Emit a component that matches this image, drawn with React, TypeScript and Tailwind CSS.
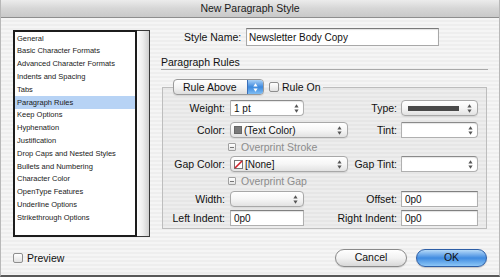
import React from "react";

const items = [
  "General",
  "Basic Character Formats",
  "Advanced Character Formats",
  "Indents and Spacing",
  "Tabs",
  "Paragraph Rules",
  "Keep Options",
  "Hyphenation",
  "Justification",
  "Drop Caps and Nested Styles",
  "Bullets and Numbering",
  "Character Color",
  "OpenType Features",
  "Underline Options",
  "Strikethrough Options",
];

function Arrows({ color = "#555" }: { color?: string }) {
  return (
    <svg width="5" height="9" viewBox="0 0 5 9" className="shrink-0">
      <path d="M2.5 0.3 L4.6 3.4 L0.4 3.4 Z" fill={color} />
      <path d="M2.5 8.7 L4.6 5.6 L0.4 5.6 Z" fill={color} />
    </svg>
  );
}

const lbl = "flex justify-end text-[10.5px] leading-none text-[#111] whitespace-nowrap";

function TextField({ className, value }: { className: string; value?: string }) {
  return (
    <div
      className={`h-[16px] bg-white border border-[#b0b0b0] border-t-[#808080] shadow-[inset_0_1px_1px_rgba(0,0,0,0.12)] flex items-center pl-[3px] text-[10px] text-[#111] ${className}`}
    >
      {value}
    </div>
  );
}

function StepField({ className, value }: { className: string; value?: string }) {
  return (
    <div
      className={`h-[16px] bg-white border border-[#b0b0b0] border-t-[#8a8a8a] rounded-r-[4px] shadow-[inset_0_1px_1px_rgba(0,0,0,0.1)] flex items-center pl-[3px] pr-[4px] text-[10px] text-[#111] ${className}`}
    >
      <span className="flex-1">{value}</span>
      <Arrows />
    </div>
  );
}

function Popup({ className, children }: { className: string; children?: React.ReactNode }) {
  return (
    <div
      className={`h-[16px] rounded-[4px] border border-[#a8a8a8] bg-gradient-to-b from-white via-[#f6f6f6] to-[#e2e2e2] shadow-[0_1px_1px_rgba(0,0,0,0.08)] flex items-center pl-[3px] pr-[5px] text-[10px] text-[#111] ${className}`}
    >
      <div className="flex-1 flex items-center gap-[2px] overflow-hidden whitespace-nowrap">{children}</div>
      <Arrows />
    </div>
  );
}

function Overprint({ text }: { text: string }) {
  return (
    <div className="flex items-center -ml-[2px] gap-[5px]">
      <div className="w-[8px] h-[8px] border border-[#a0a0a0] rounded-[1px] bg-gradient-to-b from-white to-[#e4e4e4] flex items-center justify-center">
        <div className="w-[4px] h-[1px] bg-[#777]" />
      </div>
      <span className="text-[10.5px] leading-none text-[#8c8c8c] whitespace-nowrap">{text}</span>
    </div>
  );
}

export default function App() {
  return (
    <div className="w-[500px] h-[277px] flex flex-col overflow-hidden border-x border-[#b8b8b8] border-b-2 border-b-[#5a5a5a] bg-[repeating-linear-gradient(180deg,#eeeeee_0px,#eeeeee_2px,#f5f5f5_2px,#f5f5f5_4px)] font-['Liberation_Sans',Arial,sans-serif] text-[#111]">
      {/* title bar */}
      <div className="h-[18px] shrink-0 bg-gradient-to-b from-[#ececec] via-[#d6d6d6] to-[#c9c9c9] border-b border-[#8e8e8e] flex items-center justify-center text-[10.5px] text-[#1a1a1a]">
        New Paragraph Style
      </div>

      {/* main */}
      <div className="flex pl-[12px] gap-[11px]">
        {/* list */}
        <div className="mt-[12px] h-[207px] w-[137px] flex">
          <div className="w-[124px] border-2 border-r-[2px] border-[#1c1c1c] bg-white flex flex-col">
            {items.map((it) => (
              <div
                key={it}
                className={`h-[12.8px] shrink-0 flex items-center pl-[2px] text-[7.5px] leading-none whitespace-nowrap text-[#1a1a1a] ${
                  it === "Paragraph Rules" ? "bg-[#b7d3f5]" : ""
                }`}
              >
                {it}
              </div>
            ))}
          </div>
          <div className="flex-1 border-y border-r border-[#3a3a3a] bg-gradient-to-r from-[#fdfdfd] via-[#ededed] to-[#cfcfcf]" />
        </div>

        {/* right column */}
        <div className="w-[327px] flex flex-col">
          <div className="mt-[10px] h-[18px] flex items-center">
            <span className="ml-[23px] w-[62px] text-[10.5px] leading-none whitespace-nowrap">Style Name:</span>
            <div className="w-[193px] h-[18px] bg-white border border-[#a8a8a8] border-t-[#7a7a7a] shadow-[inset_0_1px_1px_rgba(0,0,0,0.12)] flex items-center pl-[2px] text-[10px]">
              Newsletter Body Copy
            </div>
          </div>

          <div className="mt-[10px] h-[14px] border-b border-[#a9a9a9] flex items-start">
            <span className="text-[10.5px] leading-none pt-[1px]">Paragraph Rules</span>
          </div>

          <fieldset className="mt-[9px] ml-[1px] w-[325px] border border-[#bdbdbd] pl-[10px] pb-[2px] bg-black/[0.03]">
            <legend className="flex items-center">
              <div className="w-[91px] h-[16px] rounded-[4px] border border-[#9a9a9a] bg-gradient-to-b from-white via-[#f4f4f4] to-[#dedede] flex items-center overflow-hidden shadow-[0_1px_1px_rgba(0,0,0,0.1)]">
                <span className="flex-1 pl-[9px] text-[10.5px] leading-none whitespace-nowrap">Rule Above</span>
                <div className="w-[16px] h-full bg-gradient-to-b from-[#a9d1f6] via-[#3c89de] to-[#7fbdf3] border-l border-[#3b6fb8] flex items-center justify-center">
                  <Arrows color="#ffffff" />
                </div>
              </div>
              <div className="ml-[5px] w-[10px] h-[10px] border border-[#8e8e8e] rounded-[2px] bg-gradient-to-b from-white to-[#e2e2e2]" />
              <span className="ml-[3px] pr-[2px] text-[10.5px] leading-none whitespace-nowrap">Rule On</span>
            </legend>

            <div className="-ml-[10px] flex flex-col">
              {/* Weight / Type */}
              <div className="mt-[5px] h-[16px] grid grid-cols-[67px_118px_53px_77px] items-center">
                <span className={`${lbl} pr-[5px]`}>Weight:</span>
                <StepField className="w-[74px]" value="1 pt" />
                <span className={`${lbl} pr-[4px]`}>Type:</span>
                <Popup className="w-[77px]">
                  <div className="ml-[3px] w-[51px] h-[5px] bg-[#4a4a4a]" />
                </Popup>
              </div>

              {/* Color / Tint */}
              <div className="mt-[6px] h-[16px] grid grid-cols-[67px_118px_53px_77px] items-center">
                <span className={`${lbl} pr-[5px]`}>Color:</span>
                <Popup className="w-[118px]">
                  <div className="w-[8px] h-[8px] bg-[#7a7a7a] border border-[#666]" />
                  <span>(Text Color)</span>
                </Popup>
                <span className={`${lbl} pr-[4px]`}>Tint:</span>
                <StepField className="w-[77px]" />
              </div>

              {/* Overprint Stroke */}
              <div className="mt-[1px] h-[16px] grid grid-cols-[67px_118px_53px_77px] items-center">
                <span />
                <Overprint text="Overprint Stroke" />
              </div>

              {/* Gap Color / Gap Tint */}
              <div className="mt-[1px] h-[16px] grid grid-cols-[67px_118px_53px_77px] items-center">
                <span className={`${lbl} pr-[5px]`}>Gap Color:</span>
                <Popup className="w-[118px]">
                  <svg width="9" height="9" viewBox="0 0 9 9" className="shrink-0">
                    <rect x="0.5" y="0.5" width="8" height="8" fill="#fff" stroke="#777" />
                    <path d="M1 8 L8 1" stroke="#d0202a" strokeWidth="1.6" />
                  </svg>
                  <span>[None]</span>
                </Popup>
                <span className={`${lbl} pr-[4px]`}>Gap Tint:</span>
                <StepField className="w-[77px]" />
              </div>

              {/* Overprint Gap */}
              <div className="mt-[1px] h-[16px] grid grid-cols-[67px_118px_53px_77px] items-center">
                <span />
                <Overprint text="Overprint Gap" />
              </div>

              {/* Width / Offset */}
              <div className="mt-[2px] h-[16px] grid grid-cols-[67px_118px_53px_77px] items-center">
                <span className={`${lbl} pr-[5px]`}>Width:</span>
                <Popup className="w-[74px]" />
                <span className={`${lbl} pr-[4px]`}>Offset:</span>
                <TextField className="w-[77px]" value="0p0" />
              </div>

              {/* Left / Right Indent */}
              <div className="mt-[3px] h-[16px] grid grid-cols-[67px_118px_53px_77px] items-center">
                <span className={`${lbl} pr-[5px]`}>Left Indent:</span>
                <TextField className="w-[74px]" value="0p0" />
                <span className={`${lbl} pr-[4px]`}>Right Indent:</span>
                <TextField className="w-[77px]" value="0p0" />
              </div>
            </div>
          </fieldset>
        </div>
      </div>

      {/* bottom row */}
      <div className="mt-[12px] h-[18px] flex items-center pl-[12px] pr-[12px]">
        <div className="w-[10px] h-[10px] border border-[#8e8e8e] rounded-[2px] bg-gradient-to-b from-white to-[#e2e2e2]" />
        <span className="ml-[4px] text-[10.5px] leading-none">Preview</span>
        <div className="flex-1" />
        <div className="w-[72px] h-[18px] rounded-full border border-[#8a8a8a] bg-gradient-to-b from-white via-[#f2f2f2] to-[#d8d8d8] flex items-center justify-center text-[10.5px] shadow-[0_1px_1px_rgba(0,0,0,0.15)]">
          Cancel
        </div>
        <div className="ml-[9px] w-[71px] h-[18px] rounded-full border border-[#2d5ea6] bg-gradient-to-b from-[#b6daf8] via-[#3f8be0] to-[#8cc6f6] flex items-center justify-center text-[10.5px] shadow-[0_1px_1px_rgba(0,0,0,0.2)]">
          OK
        </div>
      </div>
      <div className="flex-1" />
    </div>
  );
}
